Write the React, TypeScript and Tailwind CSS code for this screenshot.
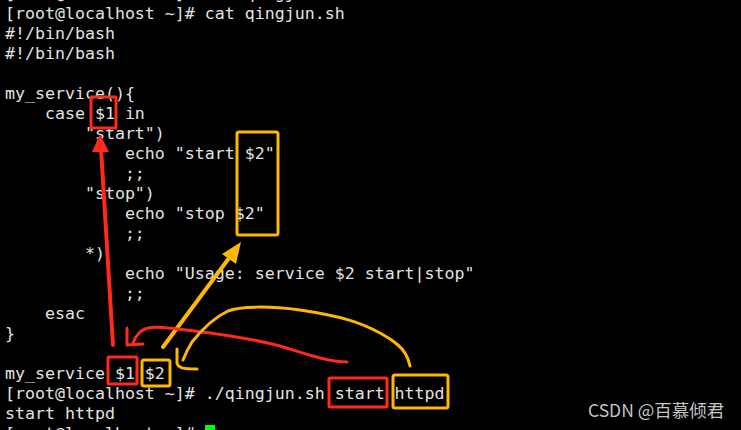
const lines = [
    "[root@localhost ~]# cat qingjun.sh",
    "[root@localhost ~]# cat qingjun.sh",
    "#!/bin/bash",
    "#!/bin/bash",
    "",
    "my_service(){",
    "    case $1 in",
    "        \"start\")",
    "            echo \"start $2\"",
    "            ;;",
    "        \"stop\")",
    "            echo \"stop $2\"",
    "            ;;",
    "        *)",
    "            echo \"Usage: service $2 start|stop\"",
    "            ;;",
    "    esac",
    "}",
    "",
    "my_service $1 $2",
    "[root@localhost ~]# ./qingjun.sh start httpd",
    "start httpd",
];

const RED = "#ff2a1a";
const YELLOW = "#ffb800";

export default function App() {
    return (
        <div className="relative h-[430px] w-[741px] overflow-hidden bg-black">
            <div
                className="-mt-[16px] pl-[5px] font-['DejaVu_Sans_Mono',monospace] text-[16.6px] leading-[20px] text-[#e2e2e2]"
            >
                {lines.map((line, i) => (
                    <div key={i} className="h-[20px] whitespace-pre">
                        {line}
                    </div>
                ))}
                <div className="flex h-[20px] items-center whitespace-pre">
                    <span>[root@localhost ~]# </span>
                    <span className="h-[18px] w-[10px] bg-[#00ff00]" />
                </div>
            </div>

            {/* hand drawn annotations over the terminal */}
            <svg
                className="absolute left-0 top-0"
                width="741"
                height="430"
                viewBox="0 0 741 430"
                fill="none"
                strokeLinecap="round"
                strokeLinejoin="round"
            >
                <rect x="91" y="97" width="25" height="31" stroke={RED} strokeWidth="3" />
                <rect x="237" y="132" width="41" height="103" rx="2" stroke={YELLOW} strokeWidth="3" />
                <rect x="108" y="357" width="29" height="27" rx="1" stroke={RED} strokeWidth="3" />
                <rect x="142" y="360" width="28" height="26" rx="2" stroke={YELLOW} strokeWidth="3" />
                <rect x="329" y="378" width="58" height="29" rx="1" stroke={RED} strokeWidth="3" />
                <rect x="393" y="375" width="55" height="33" rx="2" stroke={YELLOW} strokeWidth="3" />

                {/* red arrow up to case $1 */}
                <path d="M113 345 L101 148" stroke={RED} strokeWidth="4" />
                <path d="M100 134 L92 152 L109 152 Z" fill={RED} />

                {/* yellow arrow up to $2 column */}
                <path d="M163 347 L232 254" stroke={YELLOW} strokeWidth="4" />
                <path d="M241 242 L222 254 L236 264 Z" fill={YELLOW} />

                {/* red curve from start to $1 */}
                <path
                    d="M347 362 C 327 362, 300 352, 280 346 C 250 338, 213 333, 177 329 C 160 327, 148 325, 140 332 C 136 336, 134 340, 133 343"
                    stroke={RED}
                    strokeWidth="3"
                />
                <path d="M127 328 L127 345 L143 344" stroke={RED} strokeWidth="3" />

                {/* yellow curve from httpd to $2 */}
                <path
                    d="M410 366 C 408 356, 404 350, 398 345 C 390 338, 385 336, 380 333 C 360 322, 340 316, 300 310 C 270 306, 240 306, 228 311 C 213 318, 200 332, 192 342 C 187 350, 185 355, 183 360"
                    stroke={YELLOW}
                    strokeWidth="3"
                />
                <path d="M177 349 L177 363 C 178 368, 183 369, 197 369" stroke={YELLOW} strokeWidth="3" />
            </svg>

            <div
                className="absolute left-[588px] top-[398px] font-['Noto_Sans_CJK_SC',sans-serif] text-[17.5px] leading-[24px] text-[#c4c4c4]"
            >
                CSDN @百慕倾君
            </div>
        </div>
    );
}
